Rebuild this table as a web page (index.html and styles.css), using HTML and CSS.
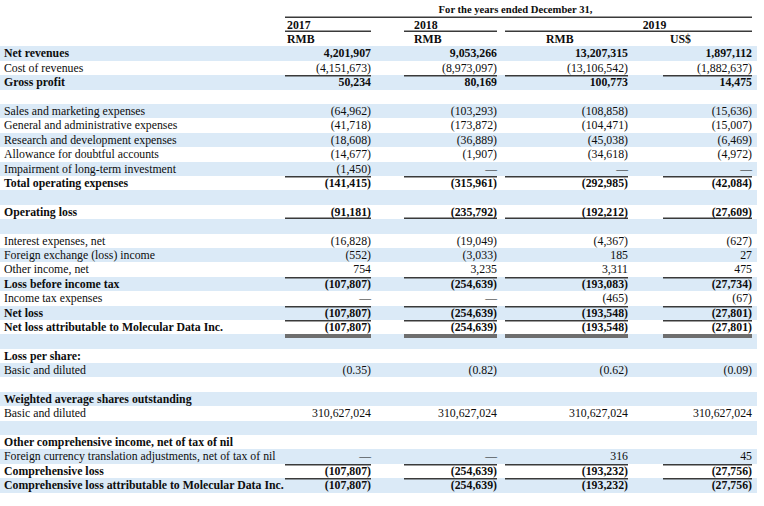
FILE: index.html
```html
<!DOCTYPE html>
<html lang="en">
<head>
<meta charset="utf-8">
<title>Consolidated statements of operations</title>
<link rel="stylesheet" href="styles.css">
</head>
<body>
<div class="sheet">
  <div class="head">
    <div class="row">
      <div class="lbl"></div>
      <div class="title ub">For the years ended December 31,</div>
    </div>
    <div class="row">
      <div class="lbl"></div>
      <div class="c1 yr ub">2017</div>
      <div class="c2 yr y18 ub">2018</div>
      <div class="c34 yr ub">2019</div>
    </div>
    <div class="row">
      <div class="lbl"></div>
      <div class="c1 yr">RMB</div>
      <div class="c2 yr y18">RMB</div>
      <div class="c3 yr rmb19">RMB</div>
      <div class="c4 yr usd">US$</div>
    </div>
  </div>
  <div class="body">
    <div class="row bold"><div class="lbl">Net revenues</div><div class="c1">4,201,907</div><div class="c2">9,053,266</div><div class="c3">13,207,315</div><div class="c4">1,897,112</div></div>
    <div class="row"><div class="lbl">Cost of revenues</div><div class="c1">(4,151,673)</div><div class="c2">(8,973,097)</div><div class="c3">(13,106,542)</div><div class="c4">(1,882,637)</div></div>
    <div class="row bold"><div class="lbl">Gross profit</div><div class="c1 t">50,234</div><div class="c2 t">80,169</div><div class="c3 t">100,773</div><div class="c4 t">14,475</div></div>
    <div class="row"></div>
    <div class="row"><div class="lbl">Sales and marketing expenses</div><div class="c1">(64,962)</div><div class="c2">(103,293)</div><div class="c3">(108,858)</div><div class="c4">(15,636)</div></div>
    <div class="row"><div class="lbl">General and administrative expenses</div><div class="c1">(41,718)</div><div class="c2">(173,872)</div><div class="c3">(104,471)</div><div class="c4">(15,007)</div></div>
    <div class="row"><div class="lbl">Research and development expenses</div><div class="c1">(18,608)</div><div class="c2">(36,889)</div><div class="c3">(45,038)</div><div class="c4">(6,469)</div></div>
    <div class="row"><div class="lbl">Allowance for doubtful accounts</div><div class="c1">(14,677)</div><div class="c2">(1,907)</div><div class="c3">(34,618)</div><div class="c4">(4,972)</div></div>
    <div class="row"><div class="lbl">Impairment of long-term investment</div><div class="c1">(1,450)</div><div class="c2">—</div><div class="c3">—</div><div class="c4">—</div></div>
    <div class="row bold"><div class="lbl">Total operating expenses</div><div class="c1 t">(141,415)</div><div class="c2 t">(315,961)</div><div class="c3 t">(292,985)</div><div class="c4 t">(42,084)</div></div>
    <div class="row"></div>
    <div class="row bold"><div class="lbl">Operating loss</div><div class="c1 ub">(91,181)</div><div class="c2 ub">(235,792)</div><div class="c3 ub">(192,212)</div><div class="c4 ub">(27,609)</div></div>
    <div class="row"></div>
    <div class="row"><div class="lbl">Interest expenses, net</div><div class="c1">(16,828)</div><div class="c2">(19,049)</div><div class="c3">(4,367)</div><div class="c4">(627)</div></div>
    <div class="row"><div class="lbl">Foreign exchange (loss) income</div><div class="c1">(552)</div><div class="c2">(3,033)</div><div class="c3">185</div><div class="c4">27</div></div>
    <div class="row"><div class="lbl">Other income, net</div><div class="c1">754</div><div class="c2">3,235</div><div class="c3">3,311</div><div class="c4">475</div></div>
    <div class="row bold"><div class="lbl">Loss before income tax</div><div class="c1 t">(107,807)</div><div class="c2 t">(254,639)</div><div class="c3 t">(193,083)</div><div class="c4 t">(27,734)</div></div>
    <div class="row"><div class="lbl">Income tax expenses</div><div class="c1">—</div><div class="c2">—</div><div class="c3">(465)</div><div class="c4">(67)</div></div>
    <div class="row bold"><div class="lbl">Net loss</div><div class="c1 t">(107,807)</div><div class="c2 t">(254,639)</div><div class="c3 t">(193,548)</div><div class="c4 t">(27,801)</div></div>
    <div class="row bold"><div class="lbl">Net loss attributable to Molecular Data Inc.</div><div class="c1 dbl">(107,807)</div><div class="c2 dbl">(254,639)</div><div class="c3 dbl">(193,548)</div><div class="c4 dbl">(27,801)</div></div>
    <div class="row"></div>
    <div class="row bold"><div class="lbl">Loss per share:</div></div>
    <div class="row"><div class="lbl">Basic and diluted</div><div class="c1">(0.35)</div><div class="c2">(0.82)</div><div class="c3">(0.62)</div><div class="c4">(0.09)</div></div>
    <div class="row"></div>
    <div class="row bold"><div class="lbl">Weighted average shares outstanding</div></div>
    <div class="row"><div class="lbl">Basic and diluted</div><div class="c1">310,627,024</div><div class="c2">310,627,024</div><div class="c3">310,627,024</div><div class="c4">310,627,024</div></div>
    <div class="row"></div>
    <div class="row bold"><div class="lbl">Other comprehensive income, net of tax of nil</div></div>
    <div class="row"><div class="lbl">Foreign currency translation adjustments, net of tax of nil</div><div class="c1">—</div><div class="c2">—</div><div class="c3">316</div><div class="c4">45</div></div>
    <div class="row bold"><div class="lbl">Comprehensive loss</div><div class="c1 t">(107,807)</div><div class="c2 t">(254,639)</div><div class="c3 t">(193,232)</div><div class="c4 t">(27,756)</div></div>
    <div class="row bold"><div class="lbl">Comprehensive loss attributable to Molecular Data Inc.</div><div class="c1 dbl">(107,807)</div><div class="c2 dbl">(254,639)</div><div class="c3 dbl">(193,232)</div><div class="c4 dbl">(27,756)</div></div>
  </div>
</div>
</body>
</html>
```
FILE: styles.css
```css
html, body {
  margin: 0;
  background: #ffffff;
}
body {
  font-family: "Liberation Serif", "Times New Roman", serif;
  font-size: 11.8px;
  color: #0d0d0d;
  padding-top: 3.3px;
}
.sheet {
  width: 757px;
}
.row {
  display: flex;
  height: 14.4px;
  line-height: 14.4px;
  white-space: nowrap;
}
.row > div {
  flex: none;
  height: 14.4px;
}
.body .row:nth-child(odd) {
  background: #dbeaf7;
}
.bold, .head { font-weight: bold; }

.lbl { width: 281px; padding-left: 4px; }
.c1, .c2, .c3, .c4 { text-align: right; }
.c1 { width: 86px; }
.c2 { width: 93px; margin-left: 33px; }
.c3 { width: 123px; margin-left: 8px; }
.c4 { width: 89px; margin-left: 35px; }
.title {
  width: 461px;
  padding-right: 6px;
  text-align: center;
  font-size: 10.6px;
}

.yr { text-align: left; padding-left: 2px; box-sizing: border-box; }
.yr.y18 { padding-left: 10px; }
.yr.rmb19 { padding-left: 41px; }
.yr.usd { padding-left: 7px; }
.c34.yr { width: 247px; margin-left: 8px; padding-left: 52px; text-align: center; }

.t { box-shadow: inset 0 1.5px 0 #3a3a3a; }
.ub { box-shadow: inset 0 -1.5px 0 #3a3a3a; }
.dbl {
  position: relative;
  z-index: 1;
  box-shadow: inset 0 1.5px 0 #3a3a3a;
  border-bottom: 4px solid #6e6e6e;
}
```
